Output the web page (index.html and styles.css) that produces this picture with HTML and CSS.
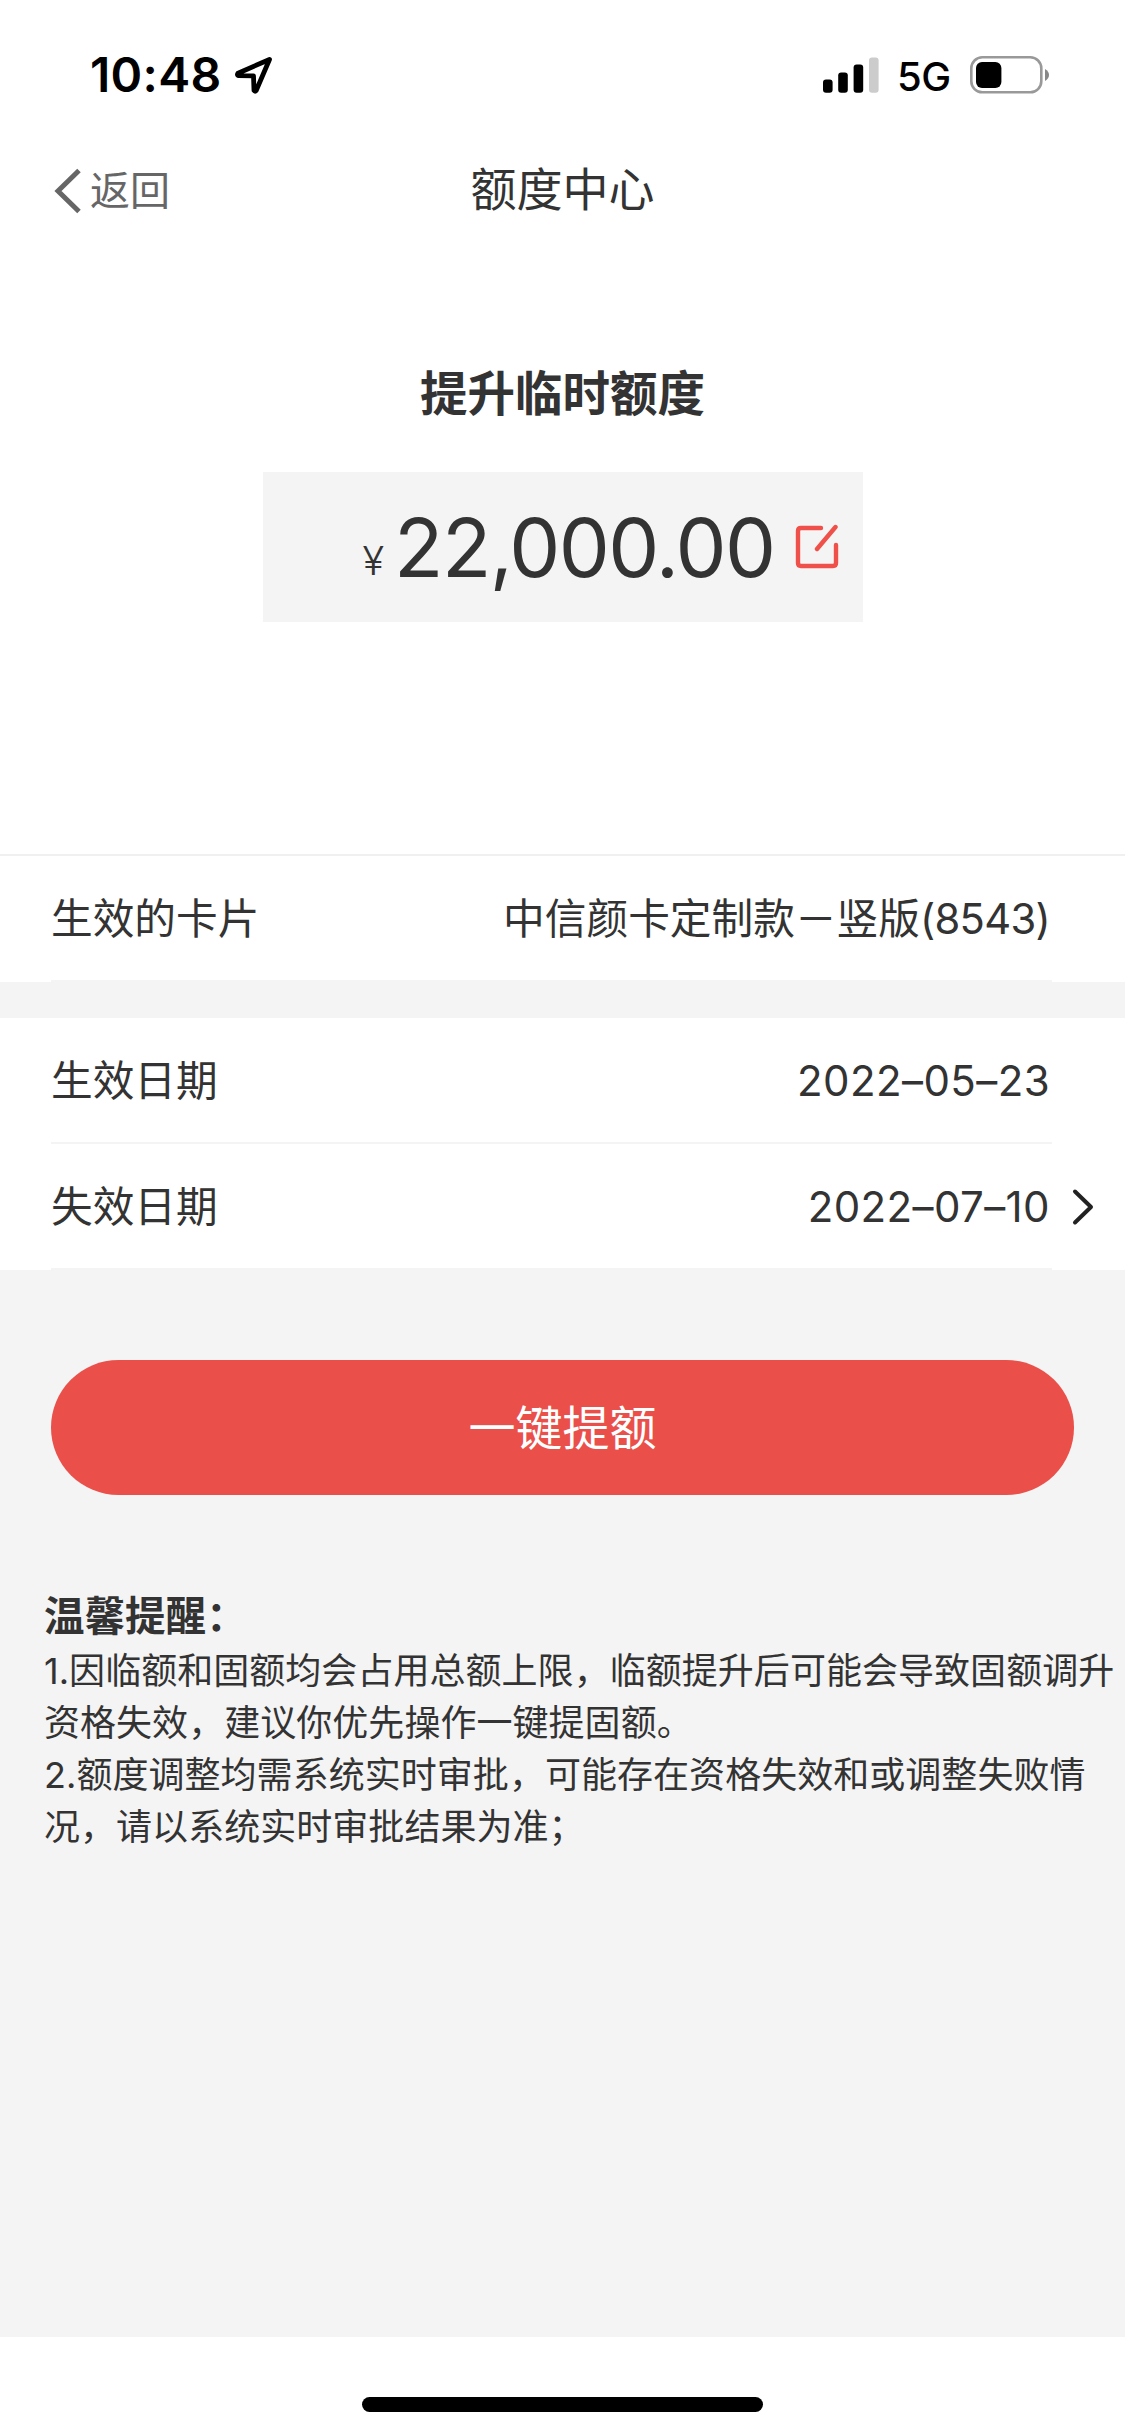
FILE: index.html
```html
<!DOCTYPE html>
<html lang="zh-CN">
<head>
    <meta charset="UTF-8">
    <meta name="viewport" content="width=device-width, initial-scale=1.0">
    <title>额度中心</title>
    <link rel="stylesheet" href="styles.css">
</head>
<body>
    <!-- Status bar -->
    <div class="status-bar">
        <span class="time">10:48</span>
        <svg class="location" width="40" height="40" viewBox="0 0 40 40">
            <path d="M35.5 4.5 L4 18.2 Q2.6 20.2 4.5 20.7 L19.5 20.9 L20 35.5 Q21 37 22.2 35.5 Z" fill="none" stroke="#000" stroke-width="4.8" stroke-linejoin="round"/>
        </svg>
        <div class="status-right">
            <svg class="signal" width="56" height="36" viewBox="0 0 56 36">
                <rect x="0" y="22.5" width="9.6" height="13.2" rx="3"/>
                <rect x="15.2" y="15.5" width="9.6" height="20.2" rx="3"/>
                <rect x="30.6" y="7.6" width="9.6" height="28.1" rx="3"/>
                <rect x="46" y="0.4" width="9.6" height="35.3" rx="3" fill="#ccc"/>
            </svg>
            <span class="network">5G</span>
            <svg class="battery" width="80" height="38" viewBox="0 0 80 38">
                <rect x="1.3" y="1.3" width="70" height="35" rx="11" fill="none" stroke="#999" stroke-width="2.6"/>
                <rect x="6" y="6" width="25.4" height="26" rx="6"/>
                <path d="M75 13 Q79 15.5 79 19 Q79 22.5 75 25 Z" fill="#888"/>
            </svg>
        </div>
    </div>

    <!-- Navigation -->
    <div class="nav-bar">
        <a class="back">
            <svg width="28" height="46" viewBox="0 0 28 46">
                <path d="M25 2.5 L4 23 L25 43.5" fill="none" stroke="#666" stroke-width="5"/>
            </svg>
            <span>返回</span>
        </a>
        <span class="nav-title">额度中心</span>
    </div>

    <!-- Amount -->
    <div class="amount-section">
        <h1>提升临时额度</h1>
        <div class="amount-box">
            <span class="currency">¥</span>
            <span class="amount">22,000.00</span>
            <svg width="44" height="46" viewBox="0 0 44 46">
                <path d="M26 4 H6 Q3 4 3 7 V39 Q3 42 6 42 H38 Q41 42 41 39 V21" fill="none" stroke="#ef5049" stroke-width="4.4" stroke-linecap="round"/>
                <path d="M40.5 3 L22 25" fill="none" stroke="#ef5049" stroke-width="4.4" stroke-linecap="round"/>
            </svg>
        </div>
    </div>

    <!-- Card info -->
    <div class="group card-group">
        <div class="row">
            <span>生效的卡片</span>
            <span class="value">中信颜卡定制款－竖版<span class="card-no">(8543)</span></span>
        </div>
    </div>

    <div class="group">
        <div class="row">
            <span>生效日期</span>
            <span class="value date">2022–05–23</span>
        </div>
        <div class="row">
            <span>失效日期</span>
            <span class="value date">2022–07–10</span>
            <svg class="arrow" width="24" height="38" viewBox="0 0 24 38">
                <path d="M3 3.5 L19 19 L3 34.5" fill="none" stroke="#222" stroke-width="4" stroke-linecap="round" stroke-linejoin="round"/>
            </svg>
        </div>
    </div>

    <button type="button" class="submit-button">一键提额</button>

    <!-- Tips -->
    <div class="tips">
        <h2>温馨提醒：</h2>
        <p>1.因临额和固额均会占用总额上限，临额提升后可能会导致固额调升<br>资格失效，建议你优先操作一键提固额。</p>
        <p>2.额度调整均需系统实时审批，可能存在资格失效和或调整失败情<br>况，请以系统实时审批结果为准；</p>
    </div>

    <div class="bottom-bar">
        <div class="home-indicator"></div>
    </div>
</body>
</html>
```

FILE: styles.css
```css
* {
    box-sizing: border-box;
}

body {
    display: flex;
    flex-direction: column;
    width: 1125px;
    height: 2435px;
    margin: 0;
    background-color: #f4f4f4;
    color: #333;
    font-family: Inter, "Noto Sans CJK SC", sans-serif;
}

h1, h2, p {
    margin: 0;
}

svg {
    display: block;
    flex-shrink: 0;
}

.status-bar {
    display: flex;
    align-items: center;
    height: 150px;
    padding: 0 75px 0 90px;
    background-color: #fff;
    color: #000;
}

.time {
    width: 131px;
    font-size: 48px;
    font-weight: 600;
    line-height: 60px;
    letter-spacing: 0.3px;
    white-space: nowrap;
}

.location {
    margin-left: 13px;
}

.status-right {
    display: flex;
    align-items: center;
    margin-left: auto;
}

.network {
    width: 53px;
    margin: 3px 20px 0 18px;
    font-size: 40px;
    font-weight: 500;
    line-height: 50px;
    letter-spacing: -0.5px;
    white-space: nowrap;
}

.nav-bar {
    display: grid;
    grid-template-columns: 1fr auto 1fr;
    align-items: center;
    height: 82px;
    padding: 0 54px;
    background-color: #fff;
}

.back {
    display: flex;
    align-items: center;
    gap: 8px;
    color: #666;
    font-size: 40px;
    line-height: 50px;
}

.nav-title {
    padding-bottom: 4px;
    font-size: 46px;
    line-height: 60px;
}

.amount-section {
    display: flex;
    flex-direction: column;
    align-items: center;
    height: 622px;
    padding-top: 132px;
    background-color: #fff;
}

h1 {
    font-size: 47.5px;
    font-weight: 700;
    line-height: 60px;
}

.amount-box {
    display: flex;
    align-items: center;
    justify-content: flex-end;
    width: 600px;
    height: 150px;
    margin-top: 48px;
    padding-right: 24px;
    background-color: #f4f4f4;
}

.currency {
    margin: 27px 10px 0 0;
    font-size: 40px;
    font-weight: 300;
    line-height: 50px;
}

.amount {
    margin: 1px 20px 0 0;
    font-size: 81px;
    line-height: 100px;
    letter-spacing: -1.6px;
}

.group {
    padding-left: 51px;
    background-color: #fff;
}

.card-group {
    margin-bottom: 36px;
    border-top: 2px solid #f0f0f0;
}

.row {
    display: flex;
    align-items: center;
    width: 1001px;
    height: 126px;
    padding-top: 2px;
    border-bottom: 2px solid #f4f4f4;
    font-size: 41.7px;
    line-height: 60px;
    white-space: nowrap;
}

.value {
    margin-left: auto;
    padding-right: 2px;
}

.card-no {
    letter-spacing: -0.7px;
}

.date {
    font-size: 42px;
    letter-spacing: 0.4px;
}

.arrow {
    margin: 0 -44px 0 20px;
}

.submit-button {
    width: 1023px;
    height: 135px;
    margin: 90px 51px 0;
    padding: 0 0 6px;
    border: none;
    border-radius: 68px;
    background-color: #ea4f49;
    color: #fff;
    font-family: inherit;
    font-size: 47px;
}

.tips {
    padding: 92px 0 0 44px;
    font-size: 36px;
    line-height: 52px;
    letter-spacing: 0.04px;
    white-space: nowrap;
}

h2 {
    height: 58px;
    font-size: 40.5px;
    font-weight: 700;
    line-height: 60px;
}

.bottom-bar {
    height: 98px;
    margin-top: auto;
    padding-top: 60px;
    background-color: #fff;
}

.home-indicator {
    width: 401px;
    height: 15px;
    margin: 0 auto;
    border-radius: 8px;
    background-color: #000;
}
```
